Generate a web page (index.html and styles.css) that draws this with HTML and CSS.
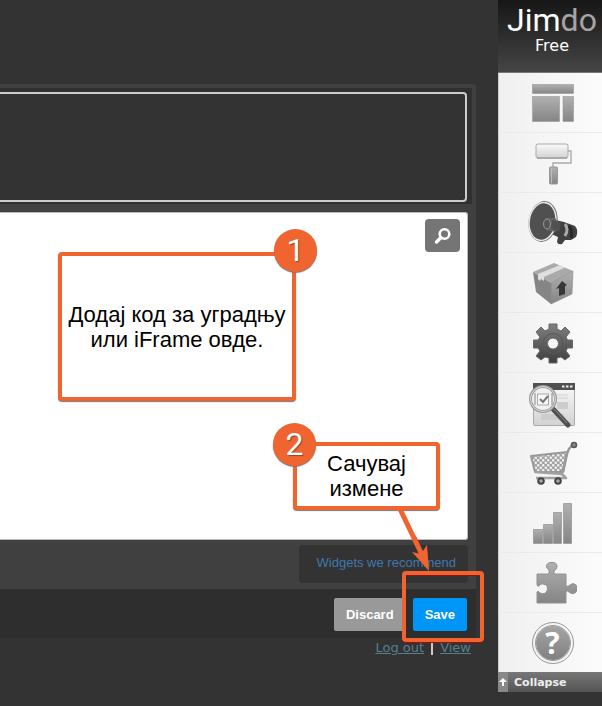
FILE: index.html
```html
<!DOCTYPE html>
<html lang="sr">
<head>
  <meta charset="utf-8">
  <title>Jimdo</title>
  <link rel="stylesheet" href="styles.css">
</head>
<body>
  <div class="page">
    <main class="main">
      <div class="editor">
        <div class="editor-body">
          <div class="preview"><div class="preview-frame"></div></div>
          <div class="code">
            <textarea class="code-input" aria-label="HTML"></textarea>
            <button type="button" class="search-button" aria-label="Search">
              <svg width="18" height="18" viewBox="0 0 18 18" fill="none" stroke="#fff">
                <circle cx="10.5" cy="7" r="4.8" stroke-width="2.6"/>
                <path d="M7 10.5L2.5 15" stroke-width="3.4" stroke-linecap="round"/>
              </svg>
            </button>
          </div>
          <div class="widgets"><a href="#">Widgets we recommend</a></div>
        </div>
        <div class="actions">
          <button type="button" class="button discard">Discard</button>
          <button type="button" class="button save">Save</button>
        </div>

        <!-- numbered steps -->
        <div class="callout callout-code">
          <span class="number number-right">1</span>
          <p>Додај код за уградњу<br>или iFrame овде.</p>
        </div>
        <div class="callout callout-save">
          <span class="number number-left">2</span>
          <p>Сачувај<br>измене</p>
        </div>
        <div class="highlight"></div>
        <svg class="arrow" width="40" height="64" viewBox="0 0 40 64">
          <path d="M18 27l5 9" stroke="#e00b0b" stroke-width="3"/>
          <path d="M4 0L27 48" stroke="#f0652f" stroke-width="5"/>
          <path d="M33 62L16 43L25 45L31 36Z" fill="#f0652f"/>
        </svg>
      </div>
      <div class="links"><a href="#">Log out</a><span class="divider"></span><a href="#">View</a></div>
    </main>

    <aside class="sidebar">
      <div class="logo">
        <span class="logo-name">Jim<span class="logo-end">do</span></span>
        <span class="logo-plan">Free</span>
      </div>
      <nav class="tools">
        <button type="button" class="tool" aria-label="Layout">
          <svg width="48" height="48" viewBox="0 0 48 48">
            <defs>
              <linearGradient id="gray" x1="0" y1="0" x2="0" y2="1"><stop offset="0" stop-color="#b0b0b0"/><stop offset="1" stop-color="#858585"/></linearGradient>
              <linearGradient id="dark" x1="0" y1="0" x2="0" y2="1"><stop offset="0" stop-color="#808080"/><stop offset="1" stop-color="#3e3e3e"/></linearGradient>
              <linearGradient id="light" x1="0" y1="0" x2="0" y2="1"><stop offset="0" stop-color="#fafafa"/><stop offset="1" stop-color="#d2d2d2"/></linearGradient>
              <pattern id="mesh" width="5" height="5" patternUnits="userSpaceOnUse">
                <rect width="5" height="5" fill="#a2a2a2"/>
                <circle cx="1.25" cy="1.25" r="1.3" fill="#f0f0f0"/>
                <circle cx="3.75" cy="3.75" r="1.3" fill="#f0f0f0"/>
              </pattern>
            </defs>
            <g fill="url(#gray)" stroke="#999" stroke-width=".6">
              <rect x="3.5" y="5.5" width="41" height="9"/>
              <rect x="3.5" y="17.5" width="27" height="25"/>
              <rect x="34" y="17.5" width="10.5" height="25"/>
            </g>
          </svg>
        </button>
        <button type="button" class="tool" aria-label="Style">
          <svg width="48" height="48" viewBox="0 0 48 48">
            <rect x="7" y="5" width="32" height="14" rx="2" fill="url(#light)" stroke="#aaa"/>
            <path d="M8 19h30" stroke="#aaa" stroke-width="2"/>
            <path d="M39 12h3v12H24v5" fill="none" stroke="#ababab" stroke-width="1.4"/>
            <rect x="20.5" y="28" width="8" height="17" rx="1" fill="url(#gray)" stroke="#999"/>
            <path d="M22.5 29v15" stroke="#bcbcbc"/>
          </svg>
        </button>
        <button type="button" class="tool" aria-label="News">
          <svg width="52" height="48" viewBox="0 0 52 48">
            <path d="M24 20L37 23L48 27Q52 32 49 38L44 41L38 41L35 45Q31 46 30 43L31 38L22 34Z" fill="#414141"/>
            <path d="M38 25q4 5 0 12" fill="none" stroke="#aaa" stroke-width="3"/>
            <path d="M42 27q4 5 2 12" fill="none" stroke="#292929" stroke-width="3"/>
            <ellipse cx="16" cy="22.5" rx="14.5" ry="20.5" transform="rotate(9 16 22.5)" fill="#777"/>
            <ellipse cx="15.5" cy="22.5" rx="13.3" ry="19" transform="rotate(9 15.5 22.5)" fill="#505050" stroke="#eee" stroke-width="1.4"/>
            <path d="M18 19l10 0 4 5-3 9-10-2z" fill="#626262"/>
            <ellipse cx="20" cy="25" rx="3.5" ry="5" fill="#555" stroke="#999"/>
            <path d="M25 21l9 3-2 9-8-4z" fill="#505050"/>
          </svg>
        </button>
        <button type="button" class="tool" aria-label="Shop">
          <svg width="48" height="48" viewBox="0 0 48 48">
            <path d="M4 13L25 4L44 12L22 24Z" fill="#aaa"/>
            <path d="M4 13L22 24V45L7 33Z" fill="#858585"/>
            <path d="M22 24L44 12L43 35L22 45Z" fill="url(#gray)" stroke="#888" stroke-width=".6"/>
            <path d="M9 15L31 6L36 8.5L15 18V22L12 20L11 22L9 20Z" fill="#dedede"/>
            <path d="M33 22L38 26L36 27V35L30 37V29L27 30Z" fill="#373737"/>
          </svg>
        </button>
        <button type="button" class="tool" aria-label="Settings">
          <svg width="48" height="48" viewBox="0 0 48 48">
            <g fill="url(#dark)" fill-rule="evenodd" stroke="#666" stroke-linejoin="round">
              <path d="M20 5H28V10L32 12L36 8L41 13L37 18L38.5 21H43.5V29H38.5L37 32L41 37L36 41L32 38L28 39V44H20V39L16 38L12 41L7 37L11 32L9 29H4.5V21H9L11 18L7 13L12 8L16 12L20 10ZM24 19A5.5 5.5 0 1 0 24 30A5.5 5.5 0 1 0 24 19Z"/>
            </g>
            <circle cx="24" cy="24.5" r="10" fill="none" stroke="#585858"/>
          </svg>
        </button>
        <button type="button" class="tool" aria-label="Search engines">
          <svg width="50" height="50" viewBox="0 0 50 50">
            <rect x="5.5" y="5.5" width="41" height="42" rx="1" fill="url(#light)" stroke="#aaa"/>
            <path d="M5 5h42v7H5z" fill="#505050"/>
            <path d="M34 8.5h2.5M38 8.5h2.5M42 8.5h2.5" stroke="#eee" stroke-width="2"/>
            <path d="M29 17h11M29 20h11" stroke="#d0d0d0"/>
            <path d="M29 24h11v7H29zM13 36h23v6H13z" fill="#cdcdcd"/>
            <path d="M25 31L40 47" stroke="#505050" stroke-width="5" stroke-linecap="round"/>
            <path d="M26 31L39 45" stroke="#8a8a8a"/>
            <circle cx="15" cy="21" r="12.5" fill="#f1f1f1" stroke="#999" stroke-width="3"/>
            <circle cx="15" cy="21" r="12.5" fill="none" stroke="#ddd"/>
            <path d="M7 15v12M24 15v12" stroke="#aaa" stroke-width="1.5"/>
            <rect x="9.5" y="16" width="11" height="11" fill="#f8f8f8" stroke="#aaa"/>
            <path d="M12 21l3 3 5-6" fill="none" stroke="#777" stroke-width="2"/>
          </svg>
        </button>
        <button type="button" class="tool" aria-label="Orders">
          <svg width="52" height="48" viewBox="0 0 52 48">
            <path d="M4 17L40 13L36 33L8 33Z" fill="url(#mesh)" stroke="#999" stroke-width="2" stroke-linejoin="round"/>
            <path d="M46 6Q42 8 40 15L36 33" fill="none" stroke="#999" stroke-width="2.5"/>
            <path d="M8 33L35 35L39 39H9" fill="none" stroke="#a2a2a2" stroke-width="2.5" stroke-linejoin="round"/>
            <circle cx="47" cy="6" r="2.5" fill="#888" stroke="#555" stroke-width="1.5"/>
            <circle cx="14" cy="42" r="2.8" fill="#aaa" stroke="#444" stroke-width="2"/>
            <circle cx="31" cy="42" r="2.8" fill="#aaa" stroke="#444" stroke-width="2"/>
          </svg>
        </button>
        <button type="button" class="tool" aria-label="Statistics">
          <svg width="48" height="48" viewBox="0 0 48 48">
            <g fill="url(#gray)" stroke="#999" stroke-width=".8">
              <path d="M4.5 30.5h9v14h-9z"/>
              <path d="M14.5 25.5h9v19h-9z"/>
              <path d="M24.5 13.5h8v31h-8z"/>
              <path d="M34.5 4.5h8v40h-8z"/>
            </g>
          </svg>
        </button>
        <button type="button" class="tool" aria-label="Add-ons">
          <svg width="48" height="48" viewBox="0 0 48 48">
            <path d="M8 15H20V11Q17 9 17.5 7Q18 3 23 3.5Q28 3 28 8Q28 10 25 12V15H37V27Q39 28 41 26Q44 23 47 26Q50 31 46 34Q43 36 40 33Q38 31 37 33V44H8V33Q9 31 11 34Q16 36 18 32Q20 26 14 25Q12 24 10 27Q8 28 8 25Z" fill="url(#gray)" stroke="#929292"/>
          </svg>
        </button>
        <button type="button" class="tool tool-help" aria-label="Help">
          <span class="help-icon">?</span>
        </button>
      </nav>
      <button type="button" class="collapse">
        <span class="collapse-icon">
          <svg width="8" height="8" viewBox="0 0 8 8"><path d="M4 0L8 4H5V8H3V4H0Z" fill="#fff"/></svg>
        </span>
        Collapse
      </button>
    </aside>
  </div>
</body>
</html>
```

FILE: styles.css
```css
* {
  box-sizing: border-box;
}

body {
  margin: 0;
  background-color: #333333;
  font-family: "Liberation Sans", Arial, sans-serif;
}

button {
  border: none;
  padding: 0;
  cursor: pointer;
}

.page {
  display: flex;
  align-items: flex-start;
  min-height: 100vh;
}

.main {
  flex: 1;
  min-width: 0;
  padding: 84px 22px 0 0;
}

/* Editor */

.editor {
  position: relative;
}

.editor-body {
  display: flex;
  flex-direction: column;
  padding: 4px 4px 6px 0;
  background-color: #404040;
  border-top-right-radius: 4px;
}

.preview {
  padding: 4px 5px 2px 0;
  background-color: #303030;
}

.preview-frame {
  height: 110px;
  background-color: #333333;
  border: 2px solid #cccccc;
  border-left: none;
  border-radius: 0 4px 4px 0;
}

.code {
  position: relative;
  margin: 8px 4px 0 0;
}

.code-input {
  display: block;
  width: 100%;
  height: 328px;
  border: 1px solid #bbbbbb;
  border-left: none;
  border-radius: 0 3px 3px 0;
  background-color: #ffffff;
  resize: none;
}

.search-button {
  position: absolute;
  top: 7px;
  right: 8px;
  display: flex;
  align-items: center;
  justify-content: center;
  width: 35px;
  height: 33px;
  background-color: #757575;
  border-radius: 4px;
}

.widgets {
  align-self: flex-end;
  margin: 5px 4px 0 0;
  padding: 8px 12px 10px 18px;
  background-color: #333333;
  border-radius: 4px;
  font-size: 13px;
  line-height: 20px;
}

.widgets a {
  color: #3f78ad;
  text-decoration: none;
}

.actions {
  display: flex;
  justify-content: flex-end;
  gap: 7px;
  padding: 9px 9px 7px 0;
  background-color: #2e2e2e;
}

.button {
  padding: 0 12px;
  height: 33px;
  border-radius: 2px;
  color: #ffffff;
  font-family: inherit;
  font-size: 13px;
  font-weight: bold;
}

.discard {
  background-color: #999999;
}

.save {
  background-color: #0096f7;
}

.links {
  display: flex;
  justify-content: flex-end;
  align-items: center;
  gap: 7px;
  padding: 0 5px 0 0;
  font-family: "DejaVu Sans", Verdana, sans-serif;
  font-size: 13px;
  line-height: 20px;
}

.links a {
  color: #55808f;
}

.divider {
  width: 2px;
  height: 13px;
  background-color: #cccccc;
}

/* Steps */

.callout {
  position: absolute;
  display: flex;
  align-items: center;
  justify-content: center;
  background-color: #ffffff;
  border: 4px solid #f0652f;
  border-radius: 4px;
  box-shadow: 0 1px 1px #777777;
  color: #000000;
  font-size: 22px;
  line-height: 25px;
  text-align: center;
  white-space: nowrap;
}

.callout p {
  margin: 0;
}

.callout-code {
  top: 168px;
  right: 180px;
  width: 238px;
  height: 149px;
}

.callout-save {
  top: 358px;
  right: 36px;
  width: 147px;
  height: 68px;
}

.number {
  position: absolute;
  width: 43px;
  height: 43px;
  border-radius: 50%;
  background-color: #f0652f;
  box-shadow: 0 1px 1px #777777;
  color: #ffffff;
  font-family: Roboto, sans-serif;
  font-size: 32px;
  line-height: 43px;
  text-shadow: 1px 1px 1px #8a4a30;
}

.number-right {
  top: -27px;
  right: -25px;
}

.number-left {
  top: -23px;
  left: -24px;
}

.highlight {
  position: absolute;
  top: 487px;
  right: -8px;
  width: 82px;
  height: 71px;
  border: 4px solid #f0652f;
  border-radius: 4px;
  box-shadow: inset 0 1px 0 #990f0f, 0 1px 0 #990f0f;
  pointer-events: none;
}

.arrow {
  position: absolute;
  top: 425px;
  right: 40px;
  pointer-events: none;
}

/* Sidebar */

.sidebar {
  flex: none;
  width: 104px;
  background-color: #f5f5f5;
}

.logo {
  display: flex;
  flex-direction: column;
  align-items: center;
  height: 73px;
  padding: 2px 0 0 4px;
  background: linear-gradient(#161616, #454545);
  border-bottom: 1px solid #777777;
  color: #ffffff;
}

.logo-name {
  font-family: Roboto, sans-serif;
  font-size: 32px;
  line-height: 36px;
}

.logo-end {
  color: #a5a5a5;
}

.logo-plan {
  font-family: "DejaVu Sans", Verdana, sans-serif;
  font-size: 16px;
  line-height: 16px;
}

.tools {
  display: flex;
  flex-direction: column;
}

.tool {
  display: flex;
  align-items: center;
  justify-content: center;
  height: 60px;
  padding-left: 4px;
  background: linear-gradient(90deg, #f0f0f0, #fbfbfb);
  border-bottom: 1px solid #ebebeb;
  border-left: 1px solid #cccccc;
}

.tool-help {
  height: 59px;
  border-bottom: none;
}

.help-icon {
  width: 42px;
  height: 42px;
  border: 4px double #999999;
  border-radius: 50%;
  background: linear-gradient(#a5a5a5, #808080) padding-box;
  color: #ffffff;
  font-family: "Open Sans", sans-serif;
  font-size: 30px;
  font-weight: bold;
  line-height: 34px;
}

.collapse {
  display: flex;
  align-items: center;
  gap: 6px;
  width: 100%;
  height: 20px;
  background: linear-gradient(#777777, #555555);
  color: #eeeeee;
  font-family: "DejaVu Sans", Verdana, sans-serif;
  font-size: 11px;
  font-weight: bold;
}

.collapse-icon {
  display: flex;
  align-items: center;
  justify-content: center;
  width: 10px;
  height: 20px;
  background-color: #888888;
}
```
